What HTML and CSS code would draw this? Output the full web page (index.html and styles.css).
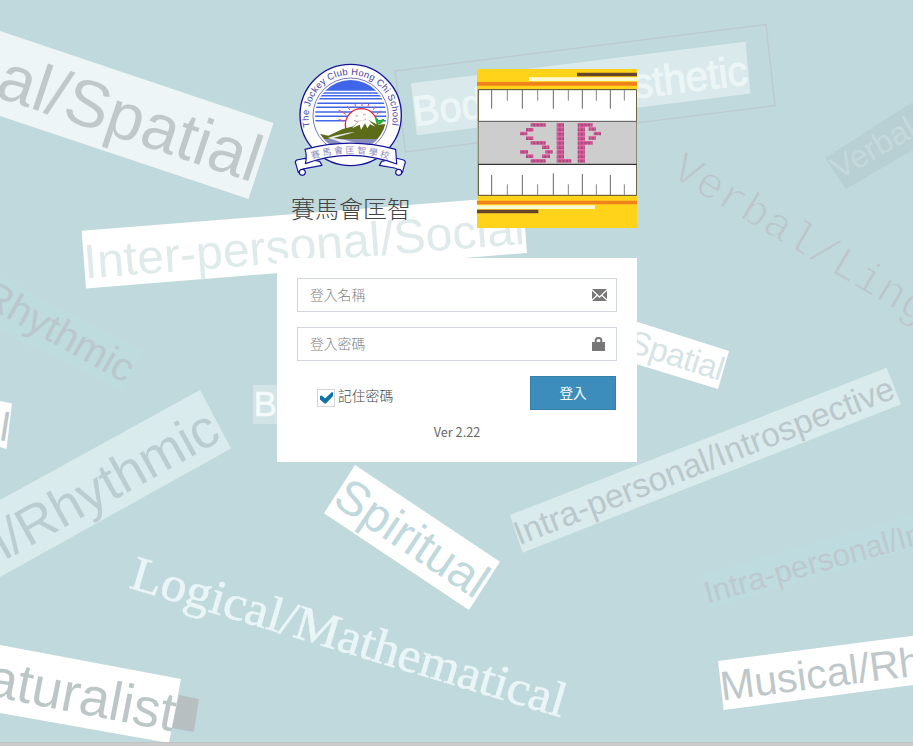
FILE: index.html
```
<!DOCTYPE html>
<html lang="zh-Hant">
<head>
<meta charset="utf-8">
<title>賽馬會匡智</title>
<link rel="stylesheet" href="styles.css">
</head>
<body>
<svg class="backdrop" viewBox="0 0 913 746" width="913" height="746" aria-hidden="true">
  <polygon points="0,31 273.500,123 248.500,199 0,116" fill="#edf5f6"/>
  <text class="end" transform="translate(252.500 182.500) rotate(18.500)" font-size="66" textLength="273" fill="#c0c9ca">al/Spatial</text>

  <polygon points="395,71 766,24.500 775,105.500 405.500,152" fill="none" stroke="#bccbd0" stroke-width="1.500"/>
  <polygon points="411,83.300 745.500,41.800 750.500,93.500 416.700,135.300" fill="#daeaec"/>
  <text transform="translate(414.500 126) rotate(-7.100)" font-size="42" textLength="337" lengthAdjust="spacingAndGlyphs" fill="#edf6f7" stroke="#edf6f7">Bodily/Kinaesthetic</text>

  <polygon points="81.700,230.700 522.500,196 527,253 86,288.500" fill="#fff"/>
  <text transform="translate(85 278.500) rotate(-4.500)" font-size="48" textLength="442" fill="#dfeaeb">Inter-personal/Social</text>

  <polygon points="825,158 913,102 913,150 846,189" fill="#b8d0d4"/>
  <text transform="translate(839 180) rotate(-30)" font-size="32" fill="#c5d9dc">Verbal</text>
  <text class="mono" transform="translate(669.700 175.800) rotate(30.700)" font-size="44" fill="#bcc5c9">Verbal/Ling</text>

  <polygon points="0,277 143,350 123,391 0,331" fill="#bedbde"/>
  <text class="end" transform="translate(125 383.500) rotate(29)" font-size="40" fill="#bac8cd">Rhythmic</text>

  <polygon points="0,401 12,403.500 6.500,449 0,447" fill="#fff"/>
  <text transform="translate(-1.500 440) rotate(9)" font-size="40" fill="#bcc6c8">l</text>

  <polygon points="0,500 200,390 231,448.500 0,577" fill="#daebed"/>
  <text class="end" transform="translate(223 439.500) rotate(-29)" font-size="53.500" fill="#bacdd0">l/Rhythmic</text>

  <rect x="253" y="385" width="60" height="39" fill="#d3e4e7"/>
  <text x="253.500" y="416" font-size="35" fill="#f4fafa" stroke="#f4fafa" stroke-width="0.500">B</text>

  <polygon points="600,310 729,351 718,389 600,353" fill="#fff"/>
  <text class="end" transform="translate(720 381) rotate(17.600)" font-size="33" textLength="98" fill="#d6e4e6">Spatial</text>

  <polygon points="510,515 886.700,367.700 901,404.300 522.700,552.700" fill="#daebed"/>
  <text transform="translate(519 545.500) rotate(-21.400)" font-size="33.600" textLength="406" fill="#bbc8cb">Intra-personal/Introspective</text>

  <polygon points="701.700,575 913,515 913,548 710,608" fill="#bedbdf"/>
  <text transform="translate(707.500 603.500) rotate(-15.600)" font-size="31" fill="#bdc9ce">Intra-personal/In</text>

  <polygon points="718,661 913,635.700 913,685 723.700,710" fill="#fff"/>
  <text transform="translate(722 700.500) rotate(-7.300)" font-size="41" fill="#bec8ca">Musical/Rh</text>

  <polygon points="355,465 500,561.700 469,610 324,513.300" fill="#fff"/>
  <text transform="translate(331 503.500) rotate(33.700)" font-size="48" textLength="173" fill="#c0d9dc">Spiritual</text>

  <text class="serif" transform="translate(128 587.500) rotate(16.700)" font-size="49" textLength="452" lengthAdjust="spacingAndGlyphs" fill="#eaf5f7">Logical/Mathematical</text>

  <polygon points="0,645 181,679 169,743 0,713" fill="#fff"/>
  <polygon points="179,695 199,699 194,732 172,728" fill="#b7bfc1"/>
  <text class="end" transform="translate(172 731.500) rotate(11)" font-size="54.500" fill="#bdc6c7">aturalist</text>
  <rect x="0" y="742" width="913" height="4" fill="#cbcbcb"/>
  <rect x="0" y="742" width="913" height="1" fill="#bfc3c4"/>
</svg>

<main class="login">
  <header class="brand">
    <div class="school">
      <svg class="crest" viewBox="33 15 360 360" role="img" aria-label="The Jockey Club Hong Chi School">
        <defs>
          <clipPath id="scene"><circle cx="212" cy="182" r="107"/></clipPath>
          <path id="ring" d="M89.500,215 A126,126 0 1 1 334.500,215"/>
          <path id="ribbon" d="M96,312 Q212,276 328,314"/>
        </defs>
        <circle cx="212" cy="180" r="152" fill="#fff" stroke="#15159c" stroke-width="4"/>
        <circle cx="212" cy="182" r="113" fill="none" stroke="#7777bd" stroke-width="3"/>
        <g clip-path="url(#scene)">
          <rect x="100" y="70" width="225" height="225" fill="#fff"/>
          <path d="M100,70h225v37H100z" fill="#3f66e8"/>
          <path d="M100,114h225M100,122h225M100,131h225M100,145h225M100,157h225M100,171h225M100,184h225M100,197h225" stroke="#3f66e8" stroke-width="4.500"/>
          <circle cx="244" cy="209" r="48" fill="#fff" stroke="#ee2030" stroke-width="4"/>
          <path d="M198,178l-22,-13M190,198l-14,-5M210,165l-9,-12M228,158l-3,-11M246,153v-9M263,157l3,-10M279,165l7,-10M290,178l12,-10" stroke="#ef4d70" stroke-width="3"/>
          <path d="M226,184q5,-5 8,0M249,180q5,-5 8,0M222,196q20,12 36,-4" fill="none" stroke="#ee3850" stroke-width="2"/>
          <path d="M100,232L145,242L188,222L220,214L239,196L266,195L292,209L325,207V252H100z" fill="#5b6b18"/>
          <path d="M216,220L239,196L266,195L286,215L270,208L262,220L255,205L243,224L239,209z" fill="#fff"/>
          <path d="M100,252h225v50H100z" fill="#8a8ebc"/>
          <path d="M143,249q40,-14 83,-18q-36,10 -66,18q40,5 120,28h-65q-40,-20 -72,-28z" fill="#e9eaf3"/>
          <path d="M292,209q-8,-13 -5,-22q11,5 8,18q4,-13 18,-14q-3,14 -21,18z" fill="#18b51e"/>
        </g>
        <text class="ring-text"><textPath href="#ring" textLength="450">The Jockey Club Hong Chi School</textPath></text>
        <g fill="#fff" stroke="#15159c" stroke-width="3.500" stroke-linejoin="round">
          <path d="M75,310L50,315Q43,320 48,328L55,353Q63,342 78,340L126,331L119,319z"/>
          <path d="M347,309L371,315Q379,320 374,328L367,353Q356,342 344,339L298,331L305,319z"/>
          <circle cx="67" cy="352" r="9"/><circle cx="356" cy="352" r="9"/>
          <path d="M75,283Q212,246 347,283L350,327Q212,276 76,326Q82,303 75,283z"/>
        </g>
        <text class="ribbon-text"><textPath href="#ribbon" textLength="232">賽馬會匡智學校</textPath></text>
      </svg>
      <h1>賽馬會匡智</h1>
    </div>

    <svg class="slp" viewBox="21 27 480 477" preserveAspectRatio="none" role="img" aria-label="SLP">
      <defs>
        <pattern id="words" width="11" height="13.500" patternUnits="userSpaceOnUse">
          <rect width="11" height="13.500" fill="#ee68aa"/>
          <path d="M1,3h9M2,6h7M1,9.500h9M3,2v8M7.500,3v8" stroke="#703058" stroke-width="1.300"/>
        </pattern>
      </defs>
      <path d="M21,27h480v477H21z" fill="#ffd319"/>
      <path d="M21,66h480v11H21zM21,422h480v11H21z" fill="#f1811d"/>
      <path d="M177,52h324v11H177zM21,436h354v11H21z" fill="#fff9d2"/>
      <path d="M321,38h180v11H321zM21,449h184v11H21z" fill="#66442a"/>
      <path d="M25,89h475v317H25z" fill="#fff" stroke="#554a30" stroke-width="3"/>
      <path d="M26,184h473v130H26z" fill="#cdcdcd"/>
      <path d="M25,184h475" stroke="#555" stroke-width="3"/>
      <path d="M25,313h475" stroke="#111" stroke-width="3"/>
      <path d="M65,90v56M157,90v56M250,90v56M337,90v56M421,90v56M65,345v60M157,345v60M250,340v65M337,342v63M421,345v60" stroke="#666" stroke-width="3"/>
      <path d="M112,90v32M203,90v32M295,90v32M379,90v32M463,90v32M112,373v32M203,373v32M295,373v32M379,373v32M463,373v32" stroke="#858585" stroke-width="3"/>
      <path fill="url(#words)" d="M182,189h45v11h-45zM168,204h22v11h-22zM150,215h22v11h-22zM168,229h22v11h-22zM182,243h45v11h-45zM216,256h22v11h-22zM150,270h24v11h-24zM226,270h22v11h-22zM168,283h22v11h-22zM216,283h24v11h-24zM182,297h45v11h-45zM260,189h22v108h22v11h-44zM323,189h45v11h-23v43h23v11h-23v54h-22zM356,201h22v11h-22zM371,215h22v11h-22zM356,228h22v11h-22z"/>
    </svg>
  </header>

  <form class="card">
    <div class="field">
      <input type="text" placeholder="登入名稱">
      <svg class="field-icon" viewBox="0 0 15 12" width="15" height="12" fill="#777"><path d="M0,0H15L7.500,7.200zM0,1.800L4.500,6L0,10.200zM15,1.800V10.200L10.500,6zM0,12L5.300,6.900L7.500,9L9.700,6.900L15,12z"/></svg>
    </div>
    <div class="field">
      <input type="password" placeholder="登入密碼">
      <svg class="field-icon lock" viewBox="0 0 13 14" width="13" height="14"><path d="M0,5H13V14H0z" fill="#777"/><path d="M3.700,6V3.500Q3.700,1 6,1H7Q9.300,1 9.300,3.500V6" fill="none" stroke="#777" stroke-width="2"/></svg>
    </div>
    <div class="actions">
      <label class="remember"><span class="box"><svg viewBox="0 0 13 12" width="13" height="12"><path d="M0,4L2,3.500L5,6.500L12,0L13,.5V4L6,11.500H4.500L0,7.500z" fill="#0f73a8"/></svg></span>記住密碼</label>
      <button type="button">登入</button>
    </div>
    <p class="version">Ver 2.22</p>
  </form>
</main>
</body>
</html>
```
FILE: styles.css
```
* { box-sizing: border-box; }

body {
  margin: 0;
  height: 746px;
  overflow: hidden;
  background: #c0d9dc;
  color: #555;
  font-family: "Noto Sans CJK TC", sans-serif;
  font-size: 14px;
}

.backdrop {
  position: absolute;
  top: 0;
  left: 0;
  z-index: -1;
  font-family: "Liberation Sans", sans-serif;
}
.backdrop .end { text-anchor: end; }
.backdrop .mono {
  font-family: "Liberation Mono", monospace;
  stroke: #c0d9dc;
  stroke-width: 1.3;
}
.backdrop .serif { font-family: "Liberation Serif", serif; stroke: #eaf5f7; stroke-width: 0.6; }

.login { width: 360px; margin-left: 277px; }

.brand {
  display: flex;
  justify-content: space-between;
  height: 258px;
  padding-top: 60px;
}
.school { margin-left: 14px; width: 120px; }
.crest { display: block; width: 120px; height: 120px; }
.ring-text { font-family: "Liberation Sans", sans-serif; font-size: 28px; fill: #45459f; }
.ribbon-text { font-size: 27px; fill: #8c8cc4; }
h1 {
  margin: 10px 0 0;
  color: #444;
  font-size: 24px;
  font-weight: 300;
  line-height: 36px;
  white-space: nowrap;
}
.slp { width: 160px; height: 159px; margin-top: 9px; }

.card {
  height: 204px;
  padding: 20px;
  background: #fff;
}
.field {
  display: flex;
  align-items: center;
  height: 34px;
  margin-bottom: 15px;
  padding: 0 9px 0 12px;
  border: 1px solid #d2d6de;
}
.field input {
  flex: 1;
  min-width: 0;
  padding: 0 0 2px;
  border: 0;
  outline: 0;
  font: 300 13.8px "Noto Sans CJK TC", sans-serif;
}
.field input::placeholder { color: #808080; }
.lock { margin-right: 2px; }

.actions {
  display: flex;
  justify-content: space-between;
  height: 34px;
  padding: 0 1px 0 20px;
}
.remember {
  display: flex;
  gap: 3px;
  margin-top: 9px;
  color: #444;
  font-size: 13.8px;
  font-weight: 300;
  line-height: 21px;
}
.box {
  display: grid;
  place-items: center;
  width: 18px;
  height: 18px;
  margin-top: 4px;
  border: 1px solid #d5d5d5;
}
button {
  width: 86px;
  height: 34px;
  padding: 0 0 2px;
  border: 1px solid #367fa9;
  background: #3c8dbc;
  color: #fff;
  font: 13.6px "Noto Sans CJK TC", sans-serif;
}
.version {
  margin: 12px 0 0;
  color: #666;
  font-size: 12.7px;
  line-height: 20px;
  text-align: center;
}
```
